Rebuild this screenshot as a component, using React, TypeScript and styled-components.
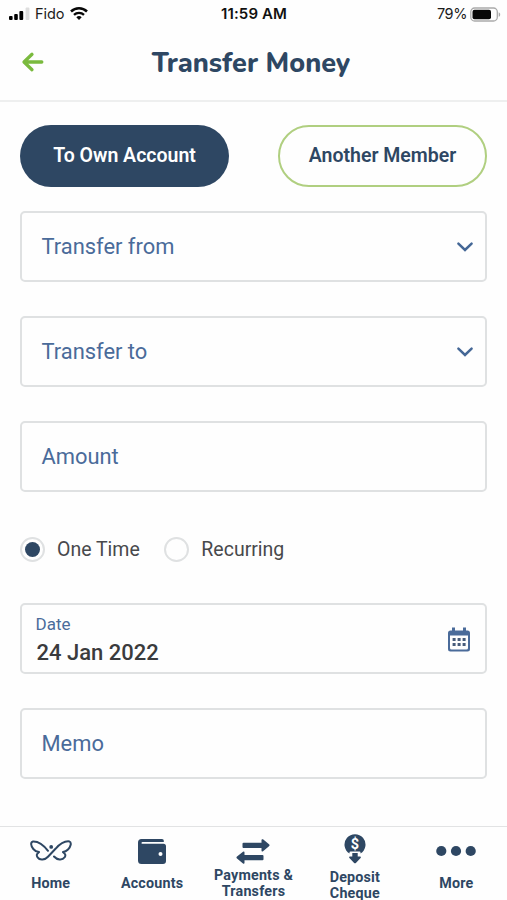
import React from 'react';
import styled, { createGlobalStyle } from 'styled-components';

const navy = '#2e4763';
const blue = '#4a6b9a';
const line = '#dfe1e2';

const Global = createGlobalStyle`
  * { box-sizing: border-box; }
  body { margin: 0; background: #fefefe; font-family: Roboto, sans-serif; }
  button { font: inherit; border: 0; padding: 0; background: none; }
  svg { display: block; flex: none; }
`;

const Screen = styled.div`
  width: 507px;
  height: 900px;
  overflow: hidden;
  display: flex;
  flex-direction: column;
`;

const StatusBar = styled.div`
  height: 28px;
  padding: 0 6px 0 9px;
  display: grid;
  grid-template-columns: 1fr auto 1fr;
  align-items: center;
  font-family: Inter, sans-serif;
  font-size: 14.5px;
  line-height: 28px;
  color: #1c1c1c;
`;

const StatusSide = styled.div<{ $end?: boolean }>`
  display: flex;
  align-items: center;
  justify-content: ${p => (p.$end ? 'flex-end' : 'flex-start')};
`;

const Carrier = styled.span`
  margin: 0 6px 0 5px;
  letter-spacing: -0.05px;
`;

const Percent = styled.span`
  margin-right: 3px;
  letter-spacing: -0.4px;
`;

const Clock = styled.span`
  margin-left: -2px;
  font-weight: 600;
  font-size: 15px;
  letter-spacing: 0.1px;
  color: #111;
`;

const Header = styled.header`
  height: 74px;
  border-bottom: 2px solid #eeefef;
  padding: 0 22px 4px 20px;
  display: grid;
  grid-template-columns: 30px 1fr 33px;
  align-items: center;
`;

const Title = styled.h1`
  margin: 4px 0 0;
  font: 800 27px/34px Nunito, "Open Sans", sans-serif;
  text-align: center;
  white-space: nowrap;
  color: ${navy};
`;

const Form = styled.main`
  height: 724px;
  padding: 23px 20px 0;
  display: flex;
  flex-direction: column;
`;

const Tabs = styled.div`
  display: flex;
  justify-content: space-between;
  margin-bottom: 24px;
`;

const Tab = styled.button<{ $active?: boolean }>`
  width: 209px;
  height: 62px;
  border-radius: 31px;
  border: ${p => (p.$active ? '0' : '2px solid #b0cf80')};
  background: ${p => (p.$active ? navy : '#fefefe')};
  color: ${p => (p.$active ? '#fff' : navy)};
  font-size: 19.5px;
  font-weight: 600;
  line-height: 24px;
`;

const Field = styled.div`
  height: 71px;
  margin-bottom: 34px;
  padding: 0 11px 0 19.5px;
  border: 2px solid ${line};
  border-radius: 5px;
  display: flex;
  align-items: center;
  justify-content: space-between;
  flex: none;
  font-size: 21.9px;
  color: ${blue};
`;

const DateField = styled(Field)`
  padding: 2px 15px 0 13.5px;
`;

const DateText = styled.div`
  display: flex;
  flex-direction: column;
`;

const DateLabel = styled.span`
  font-size: 17px;
  line-height: 26px;
`;

const DateValue = styled.span`
  padding: 1px 0 0 1px;
  font-size: 22px;
  font-weight: 500;
  line-height: 30px;
  color: #3a3b3d;
`;

const Radios = styled.div`
  height: 26px;
  margin: 10px 0 41px;
  display: flex;
  gap: 24.5px;
  flex: none;
`;

const Option = styled.label`
  display: flex;
  align-items: center;
  gap: 12px;
  font-size: 19.5px;
  line-height: 24px;
  color: #48494c;
`;

const OptionText = styled.span`
  padding-top: 2px;
`;

const Ring = styled.span<{ $on?: boolean }>`
  width: 25px;
  height: 25px;
  border-radius: 50%;
  border: 2px solid ${line};
  display: grid;
  place-items: center;
  &::after {
    content: '';
    width: 15px;
    height: 15px;
    border-radius: 50%;
    background: ${p => (p.$on ? navy : 'transparent')};
  }
`;

const Nav = styled.nav`
  height: 74px;
  border-top: 1px solid #e2e3e4;
  display: grid;
  grid-template-columns: repeat(5, 1fr);
`;

const NavItem = styled.button`
  display: flex;
  flex-direction: column;
  align-items: center;
  color: ${navy};
`;

const IconSlot = styled.span<{ $h: number }>`
  height: ${p => p.$h}px;
  display: flex;
  align-items: flex-start;
`;

const NavLabel = styled.span`
  font-size: 14.3px;
  line-height: 16px;
  font-weight: 700;
  letter-spacing: 0.2px;
  text-align: center;
  white-space: pre-line;
`;

const Signal = () => (
  <svg width="21" height="14" viewBox="0 0 21 14">
    <rect x="0" y="9" width="3.6" height="4" rx="1" />
    <rect x="5.2" y="7" width="3.6" height="6" rx="1" />
    <rect x="10.4" y="4" width="3.8" height="9" rx="1" />
    <rect x="16.6" y="0.5" width="3.8" height="12.5" rx="1" fill="#dedede" />
  </svg>
);

const Wifi = () => (
  <svg width="18" height="14" viewBox="0 0 18 14" fill="none" stroke="#080808">
    <path d="M1 4.5a11.5 11.5 0 0 1 16 0" strokeWidth="2.5" />
    <path d="M4 7.8a7.2 7.2 0 0 1 10 0" strokeWidth="2.3" />
    <path d="M6.3 10.3a4 4 0 0 1 5.4 0L9 13z" fill="#080808" stroke="none" />
  </svg>
);

const Battery = () => (
  <svg width="31" height="15" viewBox="0 0 31 15">
    <rect x="0.8" y="1" width="26.5" height="13" rx="3.8" fill="none" stroke="#aaa" strokeWidth="1.3" />
    <rect x="2.5" y="2.7" width="18.5" height="9.6" rx="2" fill="#080808" />
    <path d="M28.7 5.2c2 .8 2 3.8 0 4.6z" fill="#aaa" />
  </svg>
);

const Back = () => (
  <svg width="25" height="22" viewBox="0 0 25 22" fill="none" stroke="#7aba3e" strokeWidth="3.3" strokeLinecap="round" strokeLinejoin="round">
    <path d="M4.2 11h17.6M12 3.3 4 11l8 7.7" />
  </svg>
);

const Chevron = () => (
  <svg width="18" height="12" viewBox="0 0 18 12" fill="none" stroke="#446796" strokeWidth="2.5" strokeLinecap="round">
    <path d="m2.4 2.6 6.6 6.4 6.6-6.4" />
  </svg>
);

const Calendar = () => (
  <svg width="22" height="25" viewBox="0 0 22 25" fill={blue}>
    <path d="M4 .5h3v4H4zM15 .5h3v4h-3z" />
    <path fillRule="evenodd" d="M2.5 3.5h17Q22 3.5 22 6v16q0 2.5-2.5 2.5h-17Q0 24.5 0 22V6q0-2.5 2.5-2.5ZM2 8.5V21q0 1.5 1.5 1.5h15q1.500 0 1.500-1.500V8.500z" />
    <path fill="#465b7a" d="M4.600 11h3v3h-3zm5 0h3v3h-3zm5 0h3v3h-3zM4.600 16h3v3h-3zm5 0h3v3h-3zm5 0h3v3h-3z" />
  </svg>
);

const Butterfly = () => (
  <svg width="42" height="22" viewBox="0 0 42 22" fill="none" stroke={navy} strokeWidth="2" strokeLinecap="round" strokeLinejoin="round">
    <path d="M18 10.800C14 5.500 8 1.200 3 1.400.3 2 .700 6 3.300 9 5 11 7 11.900 9 12.100 6.700 13.500 6.200 15.500 7.600 17.400 9.800 20.600 15 19.900 18 16.700L25.500 8.800C29.500 4.300 35 .900 39.300 1.400 41.900 2.400 40.800 6.800 38 9.500 36.500 11 34.800 11.900 33 12.100 35.300 13.500 36 15.500 34.600 17.300 32.400 20.600 27 19.900 24 16.500" />
    <circle cx="21.200" cy="6.900" r="1.900" fill={navy} stroke="none" />
  </svg>
);

const Wallet = () => (
  <svg width="28" height="25" viewBox="0 0 28 25">
    <path d="M3.500 0H24q1.800 0 1.800 1.800V3H4.500q-1 0-1 .9t1 .9H25.500Q28 4.800 28 7.300V22q0 3-3 3H3.500Q0 25 0 21.500v-18Q0 0 3.500 0Z" fill={navy} />
    <circle cx="22.500" cy="15" r="2" fill="#fff" />
  </svg>
);

const Transfer = () => (
  <svg width="34" height="25" viewBox="0 0 34 25" fill={navy}>
    <path d="M7.500 3.700h18V1.200q0-1.500 1.500-.9l6 5q1.100 1 0 2l-6 4.900q-1.500.8-1.500-.8V9h-18Q6.500 9 6.500 8V4.700q0-1 1-1ZM26.500 21.200h-18v2.500q0 1.600-1.500.9l-6-5q-1.100-1 0-2l6-4.900q1.500-.8 1.500.8v2.400h18q1 0 1 1v3.300q0 1-1 1Z" />
  </svg>
);

const DollarSign = styled.text`
  font: 700 14.5px Roboto, sans-serif;
  text-anchor: middle;
  fill: #fff;
`;

const Deposit = () => (
  <svg width="22" height="30" viewBox="0 0 22 30" fill={navy}>
    <path d="M5.500 19.600A10.500 10.500 0 1 1 16.500 19.600V18.500q0-1-1-1H6.500q-1 0-1 1z" />
    <DollarSign x="11" y="15">$</DollarSign>
    <path d="M8.300 19h5.400v3.500h2.500q1.300.3.400 1.400l-4.500 4.800q-1.100 1-2.200 0l-4.500-4.800q-.9-1.100.4-1.400h2.500z" />
  </svg>
);

const Dots = () => (
  <svg width="40" height="12" viewBox="0 0 40 12" fill={navy}>
    <circle cx="5.300" cy="6" r="5.100" />
    <circle cx="20" cy="6" r="5.100" />
    <circle cx="34.700" cy="6" r="5.100" />
  </svg>
);

const IconDrop = styled.span<{ $top: number }>`
  margin-top: ${p => p.$top}px;
`;

const navItems = [
  { label: 'Home', icon: <Butterfly />, top: 13, height: 48 },
  { label: 'Accounts', icon: <Wallet />, top: 12, height: 48 },
  { label: 'Payments &\nTransfers', icon: <Transfer />, top: 12, height: 40 },
  { label: 'Deposit\nCheque', icon: <Deposit />, top: 7, height: 42 },
  { label: 'More', icon: <Dots />, top: 18, height: 48 },
];

export default function App() {
  return (
    <Screen>
      <Global />
      <StatusBar>
        <StatusSide>
          <Signal />
          <Carrier>Fido</Carrier>
          <Wifi />
        </StatusSide>
        <Clock>11:59 AM</Clock>
        <StatusSide $end>
          <Percent>79%</Percent>
          <Battery />
        </StatusSide>
      </StatusBar>
      <Header>
        <button aria-label="Back"><Back /></button>
        <Title>Transfer Money</Title>
      </Header>
      <Form>
        <Tabs>
          <Tab $active>To Own Account</Tab>
          <Tab>Another Member</Tab>
        </Tabs>
        <Field>Transfer from<Chevron /></Field>
        <Field>Transfer to<Chevron /></Field>
        <Field>Amount</Field>
        <Radios>
          <Option><Ring $on /><OptionText>One Time</OptionText></Option>
          <Option><Ring /><OptionText>Recurring</OptionText></Option>
        </Radios>
        <DateField>
          <DateText>
            <DateLabel>Date</DateLabel>
            <DateValue>24 Jan 2022</DateValue>
          </DateText>
          <Calendar />
        </DateField>
        <Field>Memo</Field>
      </Form>
      <Nav>
        {navItems.map(item => (
          <NavItem key={item.label}>
            <IconSlot $h={item.height}>
              <IconDrop $top={item.top}>{item.icon}</IconDrop>
            </IconSlot>
            <NavLabel>{item.label}</NavLabel>
          </NavItem>
        ))}
      </Nav>
    </Screen>
  );
}
